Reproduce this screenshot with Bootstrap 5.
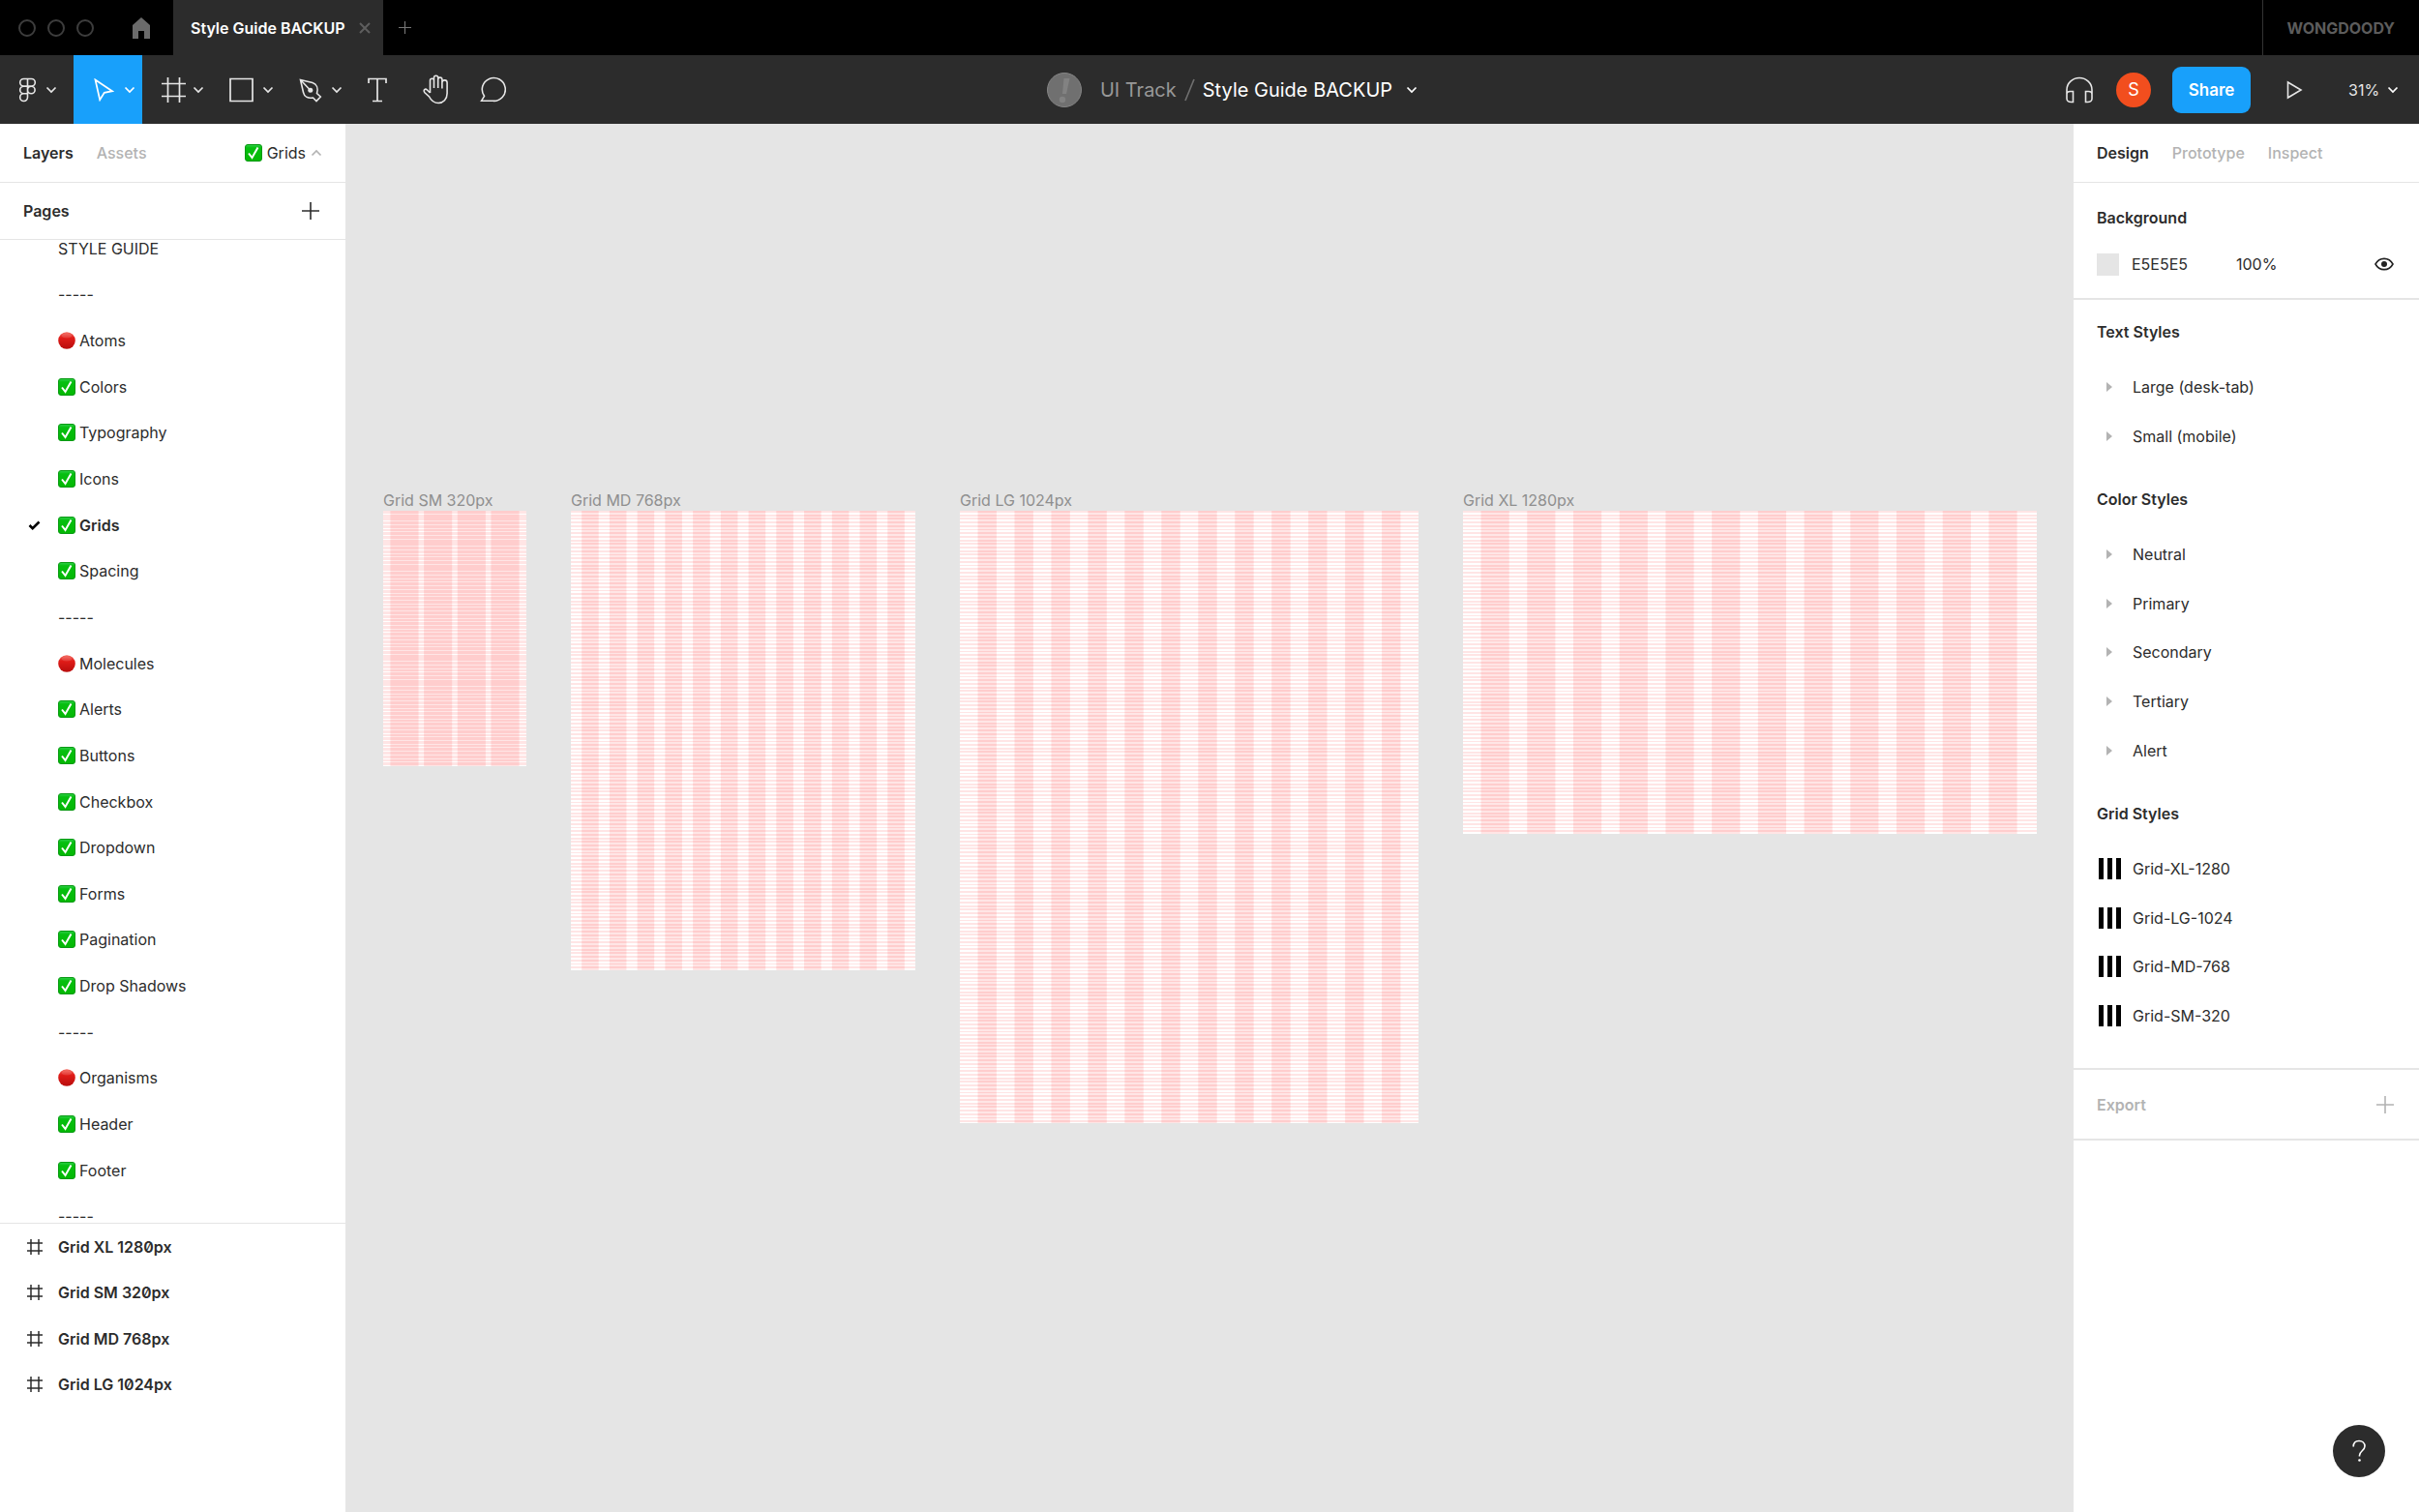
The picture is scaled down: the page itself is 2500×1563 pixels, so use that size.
<!DOCTYPE html>
<html lang="en">
<head>
<meta charset="utf-8">
<meta name="viewport" content="width=device-width, initial-scale=1">
<title>Style Guide BACKUP</title>
<link href="https://cdn.jsdelivr.net/npm/bootstrap@5.3.0/dist/css/bootstrap.min.css" rel="stylesheet">
<style>
  body { font-family: Inter, "Liberation Sans", sans-serif; font-size: 16px; line-height: 24px; color: #2c2c2c; background: #fff; }
  button { color: inherit; }
  svg { display: block; flex: none; }
  .ico { fill: none; stroke: currentColor; stroke-width: 2; }
  .plain { background: none; border: 0; padding: 0; }
  .titlebar { height: 57px; background: #000; color: #5c5c5c; }
  .lights { gap: 12px; padding-left: 19px; width: 137px; }
  .light-dot { width: 18px; height: 18px; border: 2px solid #3d3d3d; border-radius: 50%; }
  .file-tab { width: 217px; background: #2c2c2c; color: #fff; padding-left: 18px; gap: 14px; }
  .tab-plus { color: #757575; }
  .team { border-left: 1px solid #333; padding: 0 25px 0 24px; }
  .toolbar { height: 71px; background: #2c2c2c; color: #fff; }
  .bar-side { flex: 1 1 0; }
  .bar-end { padding-right: 21px; }
  .tool { height: 71px; color: #e6e6e6; }
  .tool-active { background: #18a0fb; color: #fff; }
  .doc { font-size: 20px; padding-left: 68px; }
  .doc-team { color: #989898; margin-left: 19px; }
  .avatar { width: 36px; height: 36px; border-radius: 50%; background: #f24e1e; font-size: 18px; margin-left: 24px; }
  .share { width: 81px; height: 48px; border-radius: 9px; background: #18a0fb; margin-left: 22px; font-size: 17px; }
  .zoom-level { appearance: none; background: none; border: 0; color: #e6e6e6; padding: 0; width: 40px; margin-left: 47px; }
  .left-panel { width: 357px; }
  .right-panel { width: 360px; border-left: 3px solid #e5e5e5; }
  .pane-head { height: 61px; border-bottom: 1px solid #e5e5e5; padding: 0 24px; }
  .muted { color: #b3b3b3; }
  .tab-gap { gap: 24px; }
  .pages-head { height: 59px; border-bottom: 1px solid #e5e5e5; padding: 0 27px 0 24px; }
  .pages-view { height: 1017px; border-bottom: 1px solid #e5e5e5; }
  .page-list { height: 1048px; margin-top: -15px; line-height: 12px; }
  .page-list li, .style-list li { flex: 1 1 0; min-height: 0; }
  .page-list a, .layer-list a, .style-list a { color: inherit; text-decoration: none; }
  .page-list a { gap: 4px; }
  .tick { width: 60px; padding-left: 29px; }
  .layer-list { height: 190px; font-feature-settings: "zero"; }
  .layer-list a { padding-left: 27px; gap: 15px; }
  .canvas { background: #e5e5e5; padding: 378px 0 0 39px; gap: 46px; }
  .frame-name { color: #8f8f8f; line-height: 22px; }
  .sheet { background: #fff; }
  .props { border-bottom: 2px solid #e5e5e5; padding: 0 26px 0 24px; }
  .swatch { width: 23px; height: 23px; background: #e5e5e5; margin-right: 13px; }
  .field { border: 0; padding: 0; background: none; color: inherit; width: 108px; }
  .style-title { height: 64px; }
  .style-list { margin-bottom: 8px; }
  .style-list a { gap: 12px; }
  .list-2 { height: 101px; }
  .list-4 { height: 202px; }
  .list-5 { height: 253px; }
  .help { right: 35px; bottom: 36px; width: 54px; height: 54px; border-radius: 50%; background: #2c2c2c; color: #fff; }
</style>
<script src="https://cdn.jsdelivr.net/npm/bootstrap@5.3.0/dist/js/bootstrap.bundle.min.js"></script>
</head>
<body>
<svg width="0" height="0" class="position-absolute" aria-hidden="true">
  <defs>
    <linearGradient id="greenFill" x1="0" y1="0" x2="0" y2="1"><stop offset="0" stop-color="#2fd04a"/><stop offset=".2" stop-color="#06bf10"/><stop offset="1" stop-color="#04b804"/></linearGradient>
    <linearGradient id="redFill" x1="0" y1="0" x2="0" y2="1"><stop offset="0" stop-color="#f4675c"/><stop offset=".35" stop-color="#e01c18"/><stop offset="1" stop-color="#b80d0d"/></linearGradient>
    <symbol id="ok" viewBox="0 0 18 18"><rect x=".5" y=".5" width="17" height="17" rx="2.500" fill="url(#greenFill)" stroke="#0a9a14"/><path d="M4 9.5 7.500 14 13.500 3.500" fill="none" stroke="#fff" stroke-width="2"/></symbol>
    <symbol id="dot" viewBox="0 0 18 18"><circle cx="9" cy="9" r="8.800" fill="url(#redFill)"/><ellipse cx="9" cy="3.800" rx="5.200" ry="2.600" fill="#fff" opacity=".12"/></symbol>
    <symbol id="chev" viewBox="0 0 12 8"><path d="M1.500 1.500 6 6l4.500-4.500" fill="none" stroke="currentColor" stroke-width="1.700"/></symbol>
    <symbol id="plus" viewBox="0 0 18 18"><path d="M9 0v18M0 9h18" fill="none" stroke="currentColor" stroke-width="1.600"/></symbol>
    <symbol id="hash" viewBox="0 0 18 18"><path d="M5 1v16M13 1v16M1 5h16M1 13h16" fill="none" stroke="currentColor" stroke-width="1.500"/></symbol>
    <symbol id="tri" viewBox="0 0 6 10"><path d="M0 0 6 5 0 10z" fill="#b3b3b3"/></symbol>
    <symbol id="bars" viewBox="0 0 23 22"><path d="M0 0h5v22H0zM9 0h5v22H9zM18 0h5v22h-5z" fill="#000"/></symbol>
  </defs>
</svg>

<div class="d-flex flex-column vh-100 overflow-hidden">
  <header class="titlebar d-flex align-items-stretch flex-shrink-0">
    <div class="lights d-flex align-items-center"><span class="light-dot"></span><span class="light-dot"></span><span class="light-dot"></span></div>
    <button class="plain d-flex align-items-center pe-4" aria-label="Home"><svg width="18" height="22" viewBox="0 0 18 22"><path d="M9 0 18 8v14h-6v-8H6v8H0V8z" fill="#6b6b6b"/></svg></button>
    <div class="file-tab d-flex align-items-center fw-semibold">Style Guide BACKUP
      <button class="plain" aria-label="Close tab"><svg width="12" height="12" viewBox="0 0 12 12"><path d="M1 1l10 10M11 1 1 11" stroke="#5e5e5e" stroke-width="2"/></svg></button></div>
    <button class="plain tab-plus ps-3" aria-label="New tab"><svg width="13" height="13"><use href="#plus"/></svg></button>
    <div class="team d-flex align-items-center fw-bold ms-auto">WONGDOODY</div>
  </header>

  <nav class="toolbar d-flex align-items-center flex-shrink-0" aria-label="Tools">
    <div class="bar-side d-flex align-items-center">
      <button class="plain tool d-flex align-items-center" aria-label="Menu" style="width:76px;padding-left:19px;gap:9px">
        <svg width="19" height="26" viewBox="0 0 19 26" class="ico"><path d="M9.500 1.500H5.500a3.800 3.800 0 0 0 0 7.600h4zM9.500 1.500h4a3.800 3.800 0 0 1 0 7.600h-4zM9.500 9.100h-4a3.800 3.800 0 0 0 0 7.600h4zM9.500 16.700h-4a3.900 3.900 0 1 0 4 3.900zM13.300 9.100a3.800 3.800 0 1 1 0 7.600 3.800 3.800 0 0 1 0-7.600z" stroke-width="1.600"/></svg>
        <svg width="12" height="8"><use href="#chev"/></svg></button>
      <button class="plain tool tool-active d-flex align-items-center" aria-label="Move" style="width:71px;padding-left:21px;gap:10px">
        <svg width="21" height="24" viewBox="0 0 21 24" class="ico"><path d="M1.500 1.500 19 13.200l-8.200 1.600-4.600 7.400z" stroke-width="1.700"/></svg>
        <svg width="12" height="8"><use href="#chev"/></svg></button>
      <button class="plain tool d-flex align-items-center" aria-label="Frame" style="width:70px;padding-left:20px;gap:7px">
        <svg width="25" height="26" viewBox="0 0 25 26" class="ico"><path d="M6.500 0v26M18.500 0v26M0 6.500h25M0 19.500h25" stroke-width="1.700"/></svg>
        <svg width="12" height="8"><use href="#chev"/></svg></button>
      <button class="plain tool d-flex align-items-center" aria-label="Rectangle" style="width:72px;padding-left:20px;gap:9px">
        <svg width="25" height="26" viewBox="0 0 25 26" class="ico"><path d="M1 1.500h23v23H1z" stroke-width="1.700"/></svg>
        <svg width="12" height="8"><use href="#chev"/></svg></button>
      <button class="plain tool d-flex align-items-center" aria-label="Pen" style="width:71px;padding-left:20px;gap:9px">
        <svg width="24" height="26" viewBox="0 0 24 26" class="ico"><path d="M1.500 2.500l12.500 3c4.500 1.500 6 6 4.500 11l3.800 3.500-4.300 4.500-3.500-3.500c-5 1-9-1-10-5.500z M2 3l9 9.500" stroke-width="1.600"/><circle cx="11.800" cy="13.200" r="2.500" fill="currentColor" stroke="none"/></svg>
        <svg width="12" height="8"><use href="#chev"/></svg></button>
      <button class="plain tool d-flex align-items-center" aria-label="Text" style="width:57px;padding-left:20px">
        <svg width="20" height="26" viewBox="0 0 20 26" class="ico"><path d="M1 6V1.500h18V6M10 1.500v23M5 24.500h10" stroke-width="1.700"/></svg></button>
      <button class="plain tool d-flex align-items-center" aria-label="Hand" style="width:58px;padding-left:20px">
        <svg width="27" height="31" viewBox="0 0 27 31" class="ico"><path d="M7.500 19V6.200a2 2 0 0 1 4 0V14M11.500 14V3.300a2.100 2.100 0 0 1 4.200 0V14M15.700 5.200a2.100 2.100 0 0 1 4.200 0V14.500M19.900 8.500a2.600 2.600 0 0 1 5.200 0V19.500c0 6-4 10-9 10-4.500 0-7.500-2.500-9.500-6.500L2 18.800c-2-2.800.5-4.600 2.500-2.800l3 3" stroke-width="1.600"/></svg></button>
      <button class="plain tool d-flex align-items-center" aria-label="Comment" style="width:60px;padding-left:20px">
        <svg width="28" height="27" viewBox="0 0 28 27" class="ico"><path d="M2.500 25.300l3-5A12 11.900 0 1 1 14.500 25.300z" stroke-width="1.600"/></svg></button>
    </div>

    <div class="doc d-flex align-items-center">
      <svg width="36" height="36" viewBox="0 0 36 36"><circle cx="18" cy="18" r="17.500" fill="#707070" stroke="#868686"/><path d="M17.500 6h6l-3.500 16h-4z" fill="#828282"/><circle cx="16" cy="28" r="3.200" fill="#828282"/></svg>
      <a href="#" class="doc-team text-decoration-none">UI Track</a>
      <svg width="11" height="24" viewBox="0 0 11 24" class="mx-2"><path d="M10 1 1 23" stroke="#6e6e6e" stroke-width="1.700"/></svg>
      <button class="plain d-flex align-items-center" style="gap:14px">Style Guide BACKUP <svg width="12" height="8"><use href="#chev"/></svg></button>
    </div>

    <div class="bar-side bar-end d-flex align-items-center justify-content-end">
      <button class="plain tool" aria-label="Audio"><svg width="28" height="28" viewBox="0 0 28 28" class="ico"><path d="M1 23V14a13 12.500 0 0 1 26 0v9c0 2-2 3.500-4.500 3.500h-2V15.500h3c2 0 3.500 1 3.500 3M1 18.500c0-2 1.500-3 3.500-3h3v11h-2C3 26.500 1 25 1 23" stroke-width="1.600"/></svg></button>
      <span class="avatar d-flex align-items-center justify-content-center">S</span>
      <button class="plain share fw-semibold">Share</button>
      <button class="plain tool" aria-label="Present" style="margin-left:37px"><svg width="17" height="20" viewBox="0 0 17 20" class="ico"><path d="M1.500 2 15 10 1.500 18z" stroke-width="1.600"/></svg></button>
      <select class="zoom-level" aria-label="Zoom"><option>31%</option></select>
      <svg width="12" height="8"><use href="#chev"/></svg>
    </div>
  </nav>

  <main class="d-flex flex-fill" style="min-height:0">
    <aside class="left-panel d-flex flex-column flex-shrink-0">
      <div class="pane-head tab-gap d-flex align-items-center flex-shrink-0">
        <a href="#" class="fw-semibold text-decoration-none text-reset">Layers</a>
        <a href="#" class="muted fw-medium text-decoration-none">Assets</a>
        <button class="plain d-flex align-items-center ms-auto" style="gap:5px"><svg width="18" height="18"><use href="#ok"/></svg>Grids<svg width="12" height="8" viewBox="0 0 12 8" class="muted"><path d="M1.500 6.500 6 2l4.500 4.500" fill="none" stroke="currentColor" stroke-width="1.700"/></svg></button>
      </div>
      <div class="pages-head d-flex align-items-center justify-content-between flex-shrink-0"><span class="fw-semibold">Pages</span><button class="plain" aria-label="Add page"><svg width="18" height="18"><use href="#plus"/></svg></button></div>
      <div class="pages-view overflow-hidden flex-shrink-0">
        <ul class="page-list list-unstyled d-flex flex-column mb-0">
          <li class="d-flex align-items-center"><span class="tick"></span><a href="#" class="d-flex align-items-center">STYLE GUIDE</a></li>
          <li class="d-flex align-items-center"><span class="tick"></span><a href="#" class="d-flex align-items-center">-----</a></li>
          <li class="d-flex align-items-center"><span class="tick"></span><a href="#" class="d-flex align-items-center"><svg width="18" height="18"><use href="#dot"/></svg>Atoms</a></li>
          <li class="d-flex align-items-center"><span class="tick"></span><a href="#" class="d-flex align-items-center"><svg width="18" height="18"><use href="#ok"/></svg>Colors</a></li>
          <li class="d-flex align-items-center"><span class="tick"></span><a href="#" class="d-flex align-items-center"><svg width="18" height="18"><use href="#ok"/></svg>Typography</a></li>
          <li class="d-flex align-items-center"><span class="tick"></span><a href="#" class="d-flex align-items-center"><svg width="18" height="18"><use href="#ok"/></svg>Icons</a></li>
          <li class="d-flex align-items-center fw-semibold"><span class="tick"><svg width="13" height="10" viewBox="0 0 13 10"><path d="M1.500 5l3.200 3.200L11.500 1.500" fill="none" stroke="#000" stroke-width="2.600"/></svg></span><a href="#" class="d-flex align-items-center"><svg width="18" height="18"><use href="#ok"/></svg>Grids</a></li>
          <li class="d-flex align-items-center"><span class="tick"></span><a href="#" class="d-flex align-items-center"><svg width="18" height="18"><use href="#ok"/></svg>Spacing</a></li>
          <li class="d-flex align-items-center"><span class="tick"></span><a href="#" class="d-flex align-items-center">-----</a></li>
          <li class="d-flex align-items-center"><span class="tick"></span><a href="#" class="d-flex align-items-center"><svg width="18" height="18"><use href="#dot"/></svg>Molecules</a></li>
          <li class="d-flex align-items-center"><span class="tick"></span><a href="#" class="d-flex align-items-center"><svg width="18" height="18"><use href="#ok"/></svg>Alerts</a></li>
          <li class="d-flex align-items-center"><span class="tick"></span><a href="#" class="d-flex align-items-center"><svg width="18" height="18"><use href="#ok"/></svg>Buttons</a></li>
          <li class="d-flex align-items-center"><span class="tick"></span><a href="#" class="d-flex align-items-center"><svg width="18" height="18"><use href="#ok"/></svg>Checkbox</a></li>
          <li class="d-flex align-items-center"><span class="tick"></span><a href="#" class="d-flex align-items-center"><svg width="18" height="18"><use href="#ok"/></svg>Dropdown</a></li>
          <li class="d-flex align-items-center"><span class="tick"></span><a href="#" class="d-flex align-items-center"><svg width="18" height="18"><use href="#ok"/></svg>Forms</a></li>
          <li class="d-flex align-items-center"><span class="tick"></span><a href="#" class="d-flex align-items-center"><svg width="18" height="18"><use href="#ok"/></svg>Pagination</a></li>
          <li class="d-flex align-items-center"><span class="tick"></span><a href="#" class="d-flex align-items-center"><svg width="18" height="18"><use href="#ok"/></svg>Drop Shadows</a></li>
          <li class="d-flex align-items-center"><span class="tick"></span><a href="#" class="d-flex align-items-center">-----</a></li>
          <li class="d-flex align-items-center"><span class="tick"></span><a href="#" class="d-flex align-items-center"><svg width="18" height="18"><use href="#dot"/></svg>Organisms</a></li>
          <li class="d-flex align-items-center"><span class="tick"></span><a href="#" class="d-flex align-items-center"><svg width="18" height="18"><use href="#ok"/></svg>Header</a></li>
          <li class="d-flex align-items-center"><span class="tick"></span><a href="#" class="d-flex align-items-center"><svg width="18" height="18"><use href="#ok"/></svg>Footer</a></li>
          <li class="d-flex align-items-center"><span class="tick"></span><a href="#" class="d-flex align-items-center">-----</a></li>
        </ul>
      </div>
      <ul class="layer-list list-unstyled d-flex flex-column justify-content-around fw-semibold mb-0">
        <li><a href="#" class="d-flex align-items-center"><svg width="18" height="18"><use href="#hash"/></svg>Grid XL 1280px</a></li>
        <li><a href="#" class="d-flex align-items-center"><svg width="18" height="18"><use href="#hash"/></svg>Grid SM 320px</a></li>
        <li><a href="#" class="d-flex align-items-center"><svg width="18" height="18"><use href="#hash"/></svg>Grid MD 768px</a></li>
        <li><a href="#" class="d-flex align-items-center"><svg width="18" height="18"><use href="#hash"/></svg>Grid LG 1024px</a></li>
      </ul>
    </aside>

    <section class="canvas d-flex align-items-start flex-fill overflow-hidden" aria-label="Canvas">
      <div><div class="frame-name">Grid SM 320px</div>
        <svg class="sheet" width="148" height="264" viewBox="0 0 320 568" preserveAspectRatio="none" fill="none" stroke="#f00" stroke-opacity=".1"><path d="M160 0V568" stroke-width="320" stroke-dasharray="6 2" shape-rendering="crispEdges"/><path d="M16 284H304" stroke-width="568" stroke-dasharray="63 12"/></svg></div>
      <div><div class="frame-name">Grid MD 768px</div>
        <svg class="sheet" width="356" height="475" viewBox="0 0 768 1024" preserveAspectRatio="none" fill="none" stroke="#f00" stroke-opacity=".1"><path d="M384 0V1024" stroke-width="768" stroke-dasharray="4 4" shape-rendering="crispEdges"/><path d="M24 512H744" stroke-width="1024" stroke-dasharray="38 24"/></svg></div>
      <div><div class="frame-name">Grid LG 1024px</div>
        <svg class="sheet" width="474" height="633" viewBox="0 0 1024 1366" preserveAspectRatio="none" fill="none" stroke="#f00" stroke-opacity=".1"><path d="M512 0V1366" stroke-width="1024" stroke-dasharray="4 4" shape-rendering="crispEdges"/><path d="M40 683H984" stroke-width="1366" stroke-dasharray="42 40"/></svg></div>
      <div><div class="frame-name">Grid XL 1280px</div>
        <svg class="sheet" width="593" height="334" viewBox="0 0 1280 720" preserveAspectRatio="none" fill="none" stroke="#f00" stroke-opacity=".1"><path d="M640 0V720" stroke-width="1280" stroke-dasharray="4 4" shape-rendering="crispEdges"/><path d="M40 360H1240" stroke-width="720" stroke-dasharray="63 40"/></svg></div>
    </section>

    <aside class="right-panel flex-shrink-0 position-relative">
      <div class="pane-head tab-gap d-flex align-items-center">
        <a href="#" class="fw-semibold text-decoration-none text-reset">Design</a>
        <a href="#" class="muted fw-medium text-decoration-none">Prototype</a>
        <a href="#" class="muted fw-medium text-decoration-none">Inspect</a>
      </div>
      <div class="props" style="padding-top:24px;padding-bottom:23px">
        <div class="fw-semibold mb-4">Background</div>
        <div class="d-flex align-items-center">
          <span class="swatch"></span>
          <input class="field" value="E5E5E5" aria-label="Background colour">
          <input class="field" value="100%" aria-label="Background opacity">
          <button class="plain ms-auto" aria-label="Toggle visibility"><svg width="20" height="14" viewBox="0 0 20 14"><path d="M1 7c4-7.500 14-7.500 18 0-4 7.500-14 7.500-18 0z" fill="none" stroke="#222" stroke-width="1.600"/><circle cx="10" cy="7" r="3" fill="#222"/></svg></button>
        </div>
      </div>
      <div class="props" style="padding-top:1px;padding-bottom:21px">
        <div class="style-title d-flex align-items-center fw-semibold">Text Styles</div>
        <ul class="style-list list-2 list-unstyled d-flex flex-column">
          <li class="d-flex align-items-center"><a href="#" class="d-flex align-items-center"><svg width="25" height="10"><use href="#tri" x="10" width="6" height="10"/></svg>Large (desk-tab)</a></li>
          <li class="d-flex align-items-center"><a href="#" class="d-flex align-items-center"><svg width="25" height="10"><use href="#tri" x="10" width="6" height="10"/></svg>Small (mobile)</a></li>
        </ul>
        <div class="style-title d-flex align-items-center fw-semibold">Color Styles</div>
        <ul class="style-list list-5 list-unstyled d-flex flex-column">
          <li class="d-flex align-items-center"><a href="#" class="d-flex align-items-center"><svg width="25" height="10"><use href="#tri" x="10" width="6" height="10"/></svg>Neutral</a></li>
          <li class="d-flex align-items-center"><a href="#" class="d-flex align-items-center"><svg width="25" height="10"><use href="#tri" x="10" width="6" height="10"/></svg>Primary</a></li>
          <li class="d-flex align-items-center"><a href="#" class="d-flex align-items-center"><svg width="25" height="10"><use href="#tri" x="10" width="6" height="10"/></svg>Secondary</a></li>
          <li class="d-flex align-items-center"><a href="#" class="d-flex align-items-center"><svg width="25" height="10"><use href="#tri" x="10" width="6" height="10"/></svg>Tertiary</a></li>
          <li class="d-flex align-items-center"><a href="#" class="d-flex align-items-center"><svg width="25" height="10"><use href="#tri" x="10" width="6" height="10"/></svg>Alert</a></li>
        </ul>
        <div class="style-title d-flex align-items-center fw-semibold">Grid Styles</div>
        <ul class="style-list list-4 list-unstyled d-flex flex-column">
          <li class="d-flex align-items-center"><a href="#" class="d-flex align-items-center"><svg width="25" height="22"><use href="#bars" x="2" width="23" height="22"/></svg>Grid-XL-1280</a></li>
          <li class="d-flex align-items-center"><a href="#" class="d-flex align-items-center"><svg width="25" height="22"><use href="#bars" x="2" width="23" height="22"/></svg>Grid-LG-1024</a></li>
          <li class="d-flex align-items-center"><a href="#" class="d-flex align-items-center"><svg width="25" height="22"><use href="#bars" x="2" width="23" height="22"/></svg>Grid-MD-768</a></li>
          <li class="d-flex align-items-center"><a href="#" class="d-flex align-items-center"><svg width="25" height="22"><use href="#bars" x="2" width="23" height="22"/></svg>Grid-SM-320</a></li>
        </ul>
      </div>
      <div class="props muted d-flex align-items-center justify-content-between" style="height:73px"><span class="fw-semibold">Export</span><button class="plain" aria-label="Add export"><svg width="18" height="18"><use href="#plus"/></svg></button></div>
      <button class="plain help d-flex align-items-center justify-content-center position-absolute" aria-label="Help"><svg width="14" height="24" viewBox="0 0 14 24" class="ico"><path d="M1.200 7.500C1.200 3.500 3.500 1.500 7 1.500s6 2.200 6 5.500c0 4.500-5.500 5-5.500 9.500v1" stroke-width="1.600"/><circle cx="7.500" cy="21.500" r="1.300" fill="currentColor" stroke="none"/></svg></button>
    </aside>
  </main>
</div>
</body>
</html>
